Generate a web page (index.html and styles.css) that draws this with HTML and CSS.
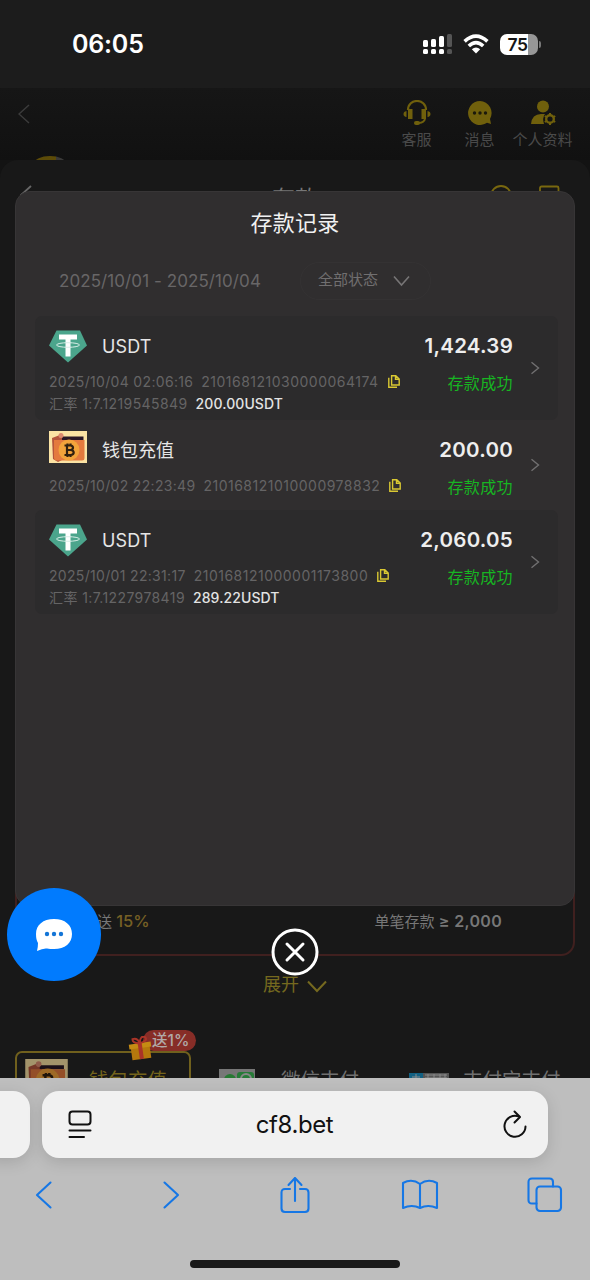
FILE: index.html
```html
<!DOCTYPE html>
<html lang="zh-CN">
<head>
<meta charset="utf-8">
<title>存款记录</title>
<link rel="stylesheet" href="styles.css">
</head>
<body>
<svg class="defs" width="0" height="0">
  <defs>
    <symbol id="usdt" viewBox="0 0 38 33">
      <path d="M7.500 .5h23.500L38 15.500 19 32.500 0 15.500z" fill="#4ba58c"/>
      <path d="M10 4.500h18v5h-6.500V26.500h-5V9.500H10z" fill="#fff"/>
      <ellipse cx="19" cy="15" rx="11.500" ry="2.300" fill="none" stroke="#d9eee8" stroke-width="1"/>
    </symbol>
    <symbol id="wallet" viewBox="0 0 38 32">
      <path d="M0 0h38v32H0z" fill="#fbe3a4"/>
      <path d="M3 7l8-3 4 2v22l-6 3-5-3z" fill="#b5553c"/>
      <path d="M13 5.500h21.500V9H13z" fill="#2a1826"/>
      <path d="M5 9h30.500v18q0 2.500-2.500 2.500H8q-3 0-3-3z" fill="#e47a3e"/>
      <circle cx="12" cy="4.500" r="2.500" fill="#dc8a70"/>
      <circle cx="20" cy="19" r="10.500" fill="#f3a33b"/>
      <g fill="none" stroke="#31200f" stroke-width="2.200"><path d="M15.500 14.500h6q2.500.3 2.500 2.300t-2.500 2.200q3.200.2 3.200 2.500t-3.200 2.500h-6M18 14.500V24M18 19h4M18.500 12.500v2M21.500 12.500v2M18.500 24v2M21.500 24v2"/></g>
    </symbol>
    <symbol id="copy" viewBox="0 0 12 13">
      <path d="M3.600.8h4.200L11.200 4v6H3.600z M7.500 1v3.300h3.500" fill="none" stroke="#d9c832" stroke-width="1.400"/>
      <path d="M.8 2.800v9.400h8.200" fill="none" stroke="#d9c832" stroke-width="1.400"/>
    </symbol>
    <symbol id="next" viewBox="0 0 10 14"><path d="M1.500 1.200l7 5.800-7 5.800" fill="none" stroke="#717071" stroke-width="1.400"/></symbol>
  </defs>
</svg>
<div class="phone">
  <header class="status">
    <span class="clock">06:05</span>
    <svg class="signal" width="30" height="21" viewBox="0 0 30 21"><g fill="#fff"><rect y="6" width="5" height="7" rx="1.500"/><rect x="8" y="5" width="5" height="8" rx="1.500"/><rect x="16" y="2" width="5" height="11" rx="1.500"/><rect y="15" width="5" height="5" rx="1.500"/><rect x="8" y="15" width="5" height="5" rx="1.500"/><rect x="16" y="15" width="5" height="5" rx="1.500"/></g><g fill="#555"><rect x="24" width="5" height="13" rx="1.500"/><rect x="24" y="15" width="5" height="5" rx="1.500"/></g></svg>
    <svg class="wifi" width="26" height="20" viewBox="0 0 26 20"><g fill="none" stroke="#fff" stroke-width="3.600"><path d="M1.600 7.400q11.400-10.400 22.800 0"/><path d="M5.800 12q7.200-6.600 14.400 0"/></g><path d="M8.800 15.200q4.200-3.600 8.400 0L13 19.500z" fill="#fff"/></svg>
    <span class="battery">75</span><i class="nub"></i>
  </header>

  <main class="page">
    <div class="topbar">
      <svg class="back" width="12" height="20" viewBox="0 0 12 20"><path d="M11 1L1 10l10 9" fill="none" stroke="#3b3b3b" stroke-width="1.500"/></svg>
      <div class="tool service"><svg width="28" height="26" viewBox="0 0 28 26"><path d="M5 10C5-2 23-2 23 10" fill="none" stroke="#70600c" stroke-width="2.200"/><path d="M5 9h4.500v10H5zM18.500 9H23v10h-4.500z" fill="#70600c"/><path d="M3.500 11v6Q.5 16.500.500 14t3-3zM24.500 11v6q3-.5 3-3t-3-3z" fill="#70600c"/><path d="M22 19q-1 3.500-6 4" fill="none" stroke="#70600c" stroke-width="2"/><rect x="11" y="21" width="6" height="4" rx="2" fill="#70600c"/></svg><span>客服</span></div>
      <div class="tool message"><svg width="28" height="26" viewBox="0 0 28 26"><path d="M14 1a12 12 0 1 0 7 21.800l4 1.200-1-5A12 12 0 0 0 14 1z" fill="#70600c"/><g fill="#1b190c"><circle cx="8.500" cy="13" r="1.700"/><circle cx="14" cy="13" r="1.700"/><circle cx="19.500" cy="13" r="1.700"/></g></svg><span>消息</span></div>
      <div class="tool profile"><svg width="28" height="26" viewBox="0 0 28 26"><circle cx="14" cy="6.500" r="6" fill="#70600c"/><path d="M2 24q1-10 10-10h4q-3 4-1 10z" fill="#70600c"/><circle cx="21" cy="19" r="3.800" fill="none" stroke="#70600c" stroke-width="2.400"/><path d="M21 13v2M21 23v2M15.800 16l1.800 1M24.400 21l1.800 1M15.800 22l1.800-1M24.400 17l1.800-1" stroke="#70600c" stroke-width="2"/></svg><span>个人资料</span></div>
      <i class="coin"></i>
    </div>
    <section class="sheet">
      <div class="sheethead">
        <svg class="sheetback" width="12" height="20" viewBox="0 0 12 20"><path d="M11 1L1 10l10 9" fill="none" stroke="#676767" stroke-width="1.800"/></svg>
        <h2 class="sheettitle">存款</h2>
        <svg class="headicons" width="70" height="22" viewBox="0 0 70 22"><g fill="none" stroke="#79680f" stroke-width="1.800"><circle cx="11" cy="11" r="10"/><rect x="50" y="1.500" width="18.500" height="20" rx="1.500"/></g></svg>
      </div>
      <div class="promo"><span class="bonus">送 <b>15%</b></span><span class="minimum">单笔存款 <b>≥ 2,000</b></span></div>
      <div class="expand"><span>展开</span><svg width="20" height="13" viewBox="0 0 20 13"><path d="M1 1.500l9 9.500 9-9.500" fill="none" stroke="#75691f" stroke-width="2"/></svg></div>
      <div class="methods">
        <div class="method chosen"><svg class="dim" width="43" height="36" viewBox="0 0 38 32"><use href="#wallet"/></svg><span>钱包充值</span>
          <div class="badge"><svg width="26" height="26" viewBox="0 0 26 26"><g transform="rotate(-8 13 13)"><path d="M3 10h19v13H3z" fill="#b5780d"/><path d="M1.500 7h22v5h-22z" fill="#c58b13"/><path d="M10.500 7h4v16h-4z" fill="#aa3428"/><path d="M12 7Q5 6 6 2q5-1 6.500 5Q14-1 19 2q2 4-6.500 5" fill="none" stroke="#aa3428" stroke-width="2"/></g></svg><span>送1%</span></div>
        </div>
        <div class="method wechat"><svg width="36" height="30" viewBox="0 0 36 30"><path d="M0 0h36v30H0z" fill="#777"/><circle cx="11" cy="11" r="6" fill="#277932"/><rect x="18" y="3" width="17" height="20" rx="3" fill="#267b37"/><circle cx="27" cy="10" r="5" fill="none" stroke="#888" stroke-width="2"/></svg><span>微信支付</span></div>
        <div class="method alipay"><svg width="40" height="24" viewBox="0 0 40 24"><path d="M0 0h14v24H0z" fill="#126082"/><path d="M14 0h26v24H14z" fill="#555"/><path d="M3 4h8M7 1v6M16 2h22M16 5h22M19 1v6M25 1v6M31 1v6M36 1v6" stroke="#8a8a8a" stroke-width="1"/></svg><span>支付宝支付</span></div>
      </div>
    </section>
  </main>

  <section class="modal">
    <h1 class="title">存款记录</h1>
    <div class="filters"><span class="dates">2025/10/01 - 2025/10/04</span><div class="state"><span>全部状态</span><svg width="17" height="12" viewBox="0 0 17 12"><path d="M1 1.500l7.500 8.500L16 1.500" fill="none" stroke="#777576" stroke-width="1.600"/></svg></div></div>
    <div class="records">
      <article class="record shaded">
        <div class="info">
          <div class="head"><svg width="38" height="33"><use href="#usdt"/></svg><span class="name">USDT</span></div>
          <div class="meta"><span>2025/10/04 02:06:16</span><span class="serial">210168121030000064174</span><svg width="12" height="13"><use href="#copy"/></svg></div>
          <div class="meta rate"><span>汇率 1:7.1219545849</span><b>200.00USDT</b></div>
        </div>
        <div class="result"><strong>1,424.39</strong><span>存款成功</span></div>
        <svg class="arrow" width="10" height="14"><use href="#next"/></svg>
      </article>
      <article class="record">
        <div class="info">
          <div class="head"><svg class="walleticon" width="38" height="32"><use href="#wallet"/></svg><span class="name chinese">钱包充值</span></div>
          <div class="meta"><span>2025/10/02 22:23:49</span><span class="serial">210168121010000978832</span><svg width="12" height="13"><use href="#copy"/></svg></div>
        </div>
        <div class="result"><strong>200.00</strong><span>存款成功</span></div>
        <svg class="arrow" width="10" height="14"><use href="#next"/></svg>
      </article>
      <article class="record shaded">
        <div class="info">
          <div class="head"><svg width="38" height="33"><use href="#usdt"/></svg><span class="name">USDT</span></div>
          <div class="meta"><span>2025/10/01 22:31:17</span><span class="serial">210168121000001173800</span><svg width="12" height="13"><use href="#copy"/></svg></div>
          <div class="meta rate"><span>汇率 1:7.1227978419</span><b>289.22USDT</b></div>
        </div>
        <div class="result"><strong>2,060.05</strong><span>存款成功</span></div>
        <svg class="arrow" width="10" height="14"><use href="#next"/></svg>
      </article>
    </div>
  </section>
  <svg class="close" width="48" height="48" viewBox="0 0 48 48"><circle cx="24" cy="24" r="22" fill="#181818" stroke="#fff" stroke-width="3"/><path d="M16 16l16 16M32 16L16 32" stroke="#fff" stroke-width="3" stroke-linecap="round"/></svg>
  <div class="chat"><svg width="38" height="34" viewBox="0 0 38 34"><path d="M19 1C8 1 1 7 1 16q0 6 2 9 0 4-1 8 6-3 10-2.500 3 .5 7 .5c11 0 18-6 18-15S30 1 19 1z" fill="#fff"/><g fill="#1375d7"><circle cx="12" cy="16" r="2.200"/><circle cx="19" cy="16" r="2.200"/><circle cx="26" cy="16" r="2.200"/></g></svg></div>

  <footer class="browser">
    <div class="addresses">
      <div class="previous"></div>
      <div class="address">
        <svg width="24" height="29" viewBox="0 0 24 29"><g fill="none" stroke="#111" stroke-width="2" stroke-linecap="round"><rect x="1.500" y="1.500" width="21" height="13" rx="3"/><path d="M1.500 20.500h21M1.500 27h14.500"/></g></svg>
        <span>cf8.bet</span>
        <svg width="24" height="29" viewBox="0 0 24 29"><g fill="none" stroke="#111" stroke-width="2" stroke-linecap="round" stroke-linejoin="round"><path d="M16 6.600A10.500 10.500 0 1 0 22.500 16.500"/><path d="M11.500 1.500l5.500 5.500-5.500 5.500"/></g></svg>
      </div>
    </div>
    <nav class="nav">
      <svg width="17" height="28" viewBox="0 0 17 28"><path d="M15.500 1.500L2 14l13.500 12.500"/></svg>
      <svg class="forward" width="17" height="28" viewBox="0 0 17 28"><path d="M1.500 1.500L15 14 1.500 26.500"/></svg>
      <svg class="share" width="30" height="38" viewBox="0 0 30 38"><path d="M10 13H5q-3.500 0-3.500 3.500v16Q1.500 36 5 36h20q3.500 0 3.500-3.500v-16Q28.500 13 25 13h-5M15 25V2M8.500 9L15 2l6.500 7"/></svg>
      <svg class="book" width="38" height="32" viewBox="0 0 38 32"><path d="M19 5Q11-1 2 4v25q9-4 17 0zM19 5q8-6 17-1v25q-9-4-17 0z"/></svg>
      <svg class="tabs" width="36" height="36" viewBox="0 0 36 36"><path d="M9.500 26.500H5q-3.500 0-3.500-3.500V5Q1.500 1.500 5 1.500h17.500Q26 1.500 26 5v4.500"/><rect x="9.500" y="9.500" width="24.500" height="24.500" rx="3.500"/></svg>
    </nav>
    <div class="home"></div>
  </footer>
</div>
</body>
</html>
```

FILE: styles.css
```css
* { box-sizing: border-box; }
body { margin: 0; background: #181818; font-family: Inter, "Noto Sans CJK SC", sans-serif; }
h1, h2 { margin: 0; font-weight: 400; }
svg { display: block; flex: none; }
span, b, strong { white-space: nowrap; }
.defs { position: absolute; }
.phone { position: relative; width: 590px; height: 1280px; overflow: hidden; display: flex; flex-direction: column; }

.status { height: 88px; flex: none; background: #1c1c1c; display: flex; align-items: center; padding-left: 72px; }
.clock { width: 351px; color: #fff; font-size: 25px; font-weight: 600; line-height: 30px; letter-spacing: -.2px; }
.wifi { margin-left: 10px; }
.battery { width: 38px; height: 21px; margin-left: 11px; padding-right: 3px; border-radius: 7px; background: linear-gradient(90deg, #fff 75%, #979797 75%); color: #151515; font-size: 17.5px; font-weight: 600; line-height: 22px; text-align: center; letter-spacing: -.5px; }
.nub { width: 2px; height: 7px; margin-left: 1px; border-radius: 0 3px 3px 0; background: #777; }

.page { height: 990px; flex: none; overflow: hidden; background: #131313; }
.topbar { position: relative; height: 72px; display: flex; align-items: flex-start; padding: 12px 16px 0 18px; background: linear-gradient(#161616, #111); }
.back { margin: 4px auto 0 0; }
.tool { display: flex; flex-direction: column; align-items: center; gap: 3px; width: 63px; color: #4a4a4a; font-size: 15px; line-height: 22px; }
.coin { position: absolute; left: 34px; top: 68px; width: 32px; height: 16px; border-radius: 50%; background: linear-gradient(90deg, #5c4b08 70%, #3a3938 70%); }
.sheet { position: relative; height: 918px; border-radius: 18px 18px 0 0; background: #181818; }
.sheethead { height: 70px; display: flex; align-items: flex-start; padding: 25px 30px 0 20px; }
.sheettitle { margin: 2px 0 0 240px; color: #777; font-size: 23px; line-height: 24px; }
.headicons { margin-left: auto; }
.promo { height: 176px; margin: 550px 15px 0; border: 2px solid #40201f; border-radius: 14px; display: flex; justify-content: space-between; align-items: flex-end; padding: 0 71px 19px 80px; color: #777; font-size: 15px; line-height: 26px; }
.bonus b { color: #766025; font-weight: 500; font-size: 16.5px; }
.minimum b { font-weight: 600; font-size: 16px; letter-spacing: .3px; }
.expand { display: flex; justify-content: center; align-items: center; gap: 8px; height: 28px; margin-top: 15px; color: #75691f; font-size: 18px; line-height: 28px; }
.expand svg { margin-top: 3px; }
.methods { display: flex; gap: 15px; margin: 52px 15px 0; }
.method { position: relative; display: flex; align-items: flex-start; height: 70px; width: 176px; font-size: 19.5px; line-height: 26px; color: #707070; }
.method > span { margin-top: 16px; }
.chosen { border: 2px solid #70601d; border-radius: 7px; color: #74641b; padding-left: 8px; }
.chosen > svg { margin-top: 6px; margin-right: 21px; filter: brightness(.65); }
.chosen > span { margin-top: 14px; }
.wechat > svg { margin: 18px 26px 0 13px; }
.alipay > svg { margin: 22px 14px 0 12px; }
.badge { position: absolute; left: 111px; top: -23px; display: flex; align-items: flex-start; }
.badge svg { position: relative; margin-top: 6px; z-index: 1; }
.badge span { margin-left: -11px; padding: 0 7px 0 9px; border-radius: 11px; background: #872d27; color: #b1a9a8; font-size: 15.5px; font-weight: 500; line-height: 21px; }

.modal { position: absolute; left: 15px; top: 191px; width: 560px; height: 715px; border: 1px solid #373536; border-radius: 15px; background: #302e2f; padding-top: 16px; }
.title { color: #f1f1f1; font-size: 22px; line-height: 30px; text-align: center; letter-spacing: .2px; }
.filters { display: flex; align-items: center; height: 40px; margin-top: 23px; padding-left: 43px; }
.dates { width: 241px; color: #686667; font-size: 17px; letter-spacing: .08px; }
.state { display: flex; align-items: center; gap: 15px; width: 131px; height: 38px; padding-left: 17px; border: 1px solid #343233; border-radius: 20px; color: #716f70; font-size: 15px; }
.state span { line-height: 22px; margin-top: -3px; }
.records { margin: 15px 16px 0 19px; }
.record { display: flex; padding: 14px 18px 0 14px; height: 90px; border-radius: 7px; }
.shaded { height: 104px; background: #2c2b2c; }
.info { width: 352px; }
.head { display: flex; align-items: center; height: 32px; gap: 15px; }
.walleticon { margin-top: -6px; }
.name { color: #e6e6e6; font-size: 18px; letter-spacing: .15px; }
.chinese { margin-top: -2px; letter-spacing: 0; }
.meta { display: flex; align-items: center; height: 22px; margin-top: 8px; color: #656465; font-size: 14px; letter-spacing: .32px; }
.serial { margin: 0 9px 0 8px; letter-spacing: .49px; }
.rate { margin-top: 0; letter-spacing: .4px; }
.rate b { margin-left: 8px; color: #e3e3e3; font-weight: 500; letter-spacing: .1px; }
.result { flex: 1; display: flex; flex-direction: column; align-items: flex-end; margin-right: 17px; }
.result strong { color: #eee; font-size: 20.5px; font-weight: 600; line-height: 32px; letter-spacing: .25px; }
.result span { margin-top: 10px; color: #17b522; font-size: 16px; line-height: 22px; letter-spacing: .4px; }
.arrow { align-self: center; margin-top: -14px; }

.close { position: absolute; left: 271px; top: 928px; }
.chat { position: absolute; left: 7px; top: 888px; width: 94px; height: 93px; border-radius: 50%; background: #017bfe; display: flex; justify-content: center; align-items: center; }

.browser { position: relative; height: 202px; flex: none; overflow: hidden; background: #bebebe; padding-top: 13px; }
.addresses { display: flex; gap: 12px; }
.previous { width: 50px; height: 67px; margin-left: -20px; border-radius: 17px; background: #f1f1f1; box-shadow: 0 4px 16px #0002; }
.address { display: flex; align-items: center; justify-content: space-between; width: 506px; height: 67px; padding: 0 21px 0 26px; border-radius: 17px; background: #f1f1f1; box-shadow: 0 4px 16px #0002; color: #111; font-size: 24px; letter-spacing: -.4px; }
.address span { margin-right: 6px; }
.nav { display: flex; align-items: center; height: 40px; margin: 17px 0 0 35px; }
.nav svg { fill: none; stroke: #1677e5; stroke-width: 2.1; stroke-linecap: round; stroke-linejoin: round; }
.nav .forward { margin-left: 111px; }
.nav .share { margin-left: 100px; }
.nav .book { margin-left: 91px; }
.nav .tabs { margin-left: 88px; }
.home { width: 210px; height: 8px; margin: 45px auto 0; border-radius: 4px; background: #191919; }
```
